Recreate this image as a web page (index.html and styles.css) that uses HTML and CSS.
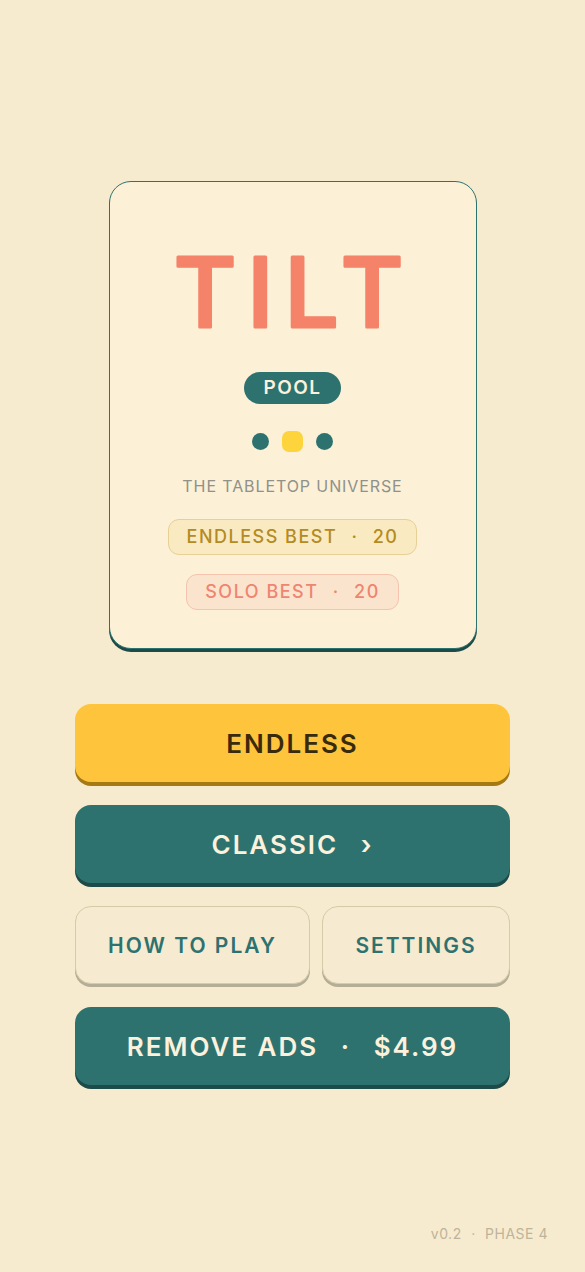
FILE: index.html
```html
<!DOCTYPE html>
<html lang="en">
<head>
  <meta charset="UTF-8" />
  <meta name="viewport" content="width=device-width, initial-scale=1.0"/>
  <title>Tilt Pool</title>
  <link rel="stylesheet" href="styles.css">
</head>
<body>
  <div class="screen">
    <div class="card">
      <svg class="title" width="320" height="126" viewBox="0 0 320 126">
        <text x="161" y="101" text-anchor="middle">TILT</text>
      </svg>
      <span class="mode-pill">POOL</span>
      <div class="dots">
        <span class="dot"></span>
        <span class="dot active"></span>
        <span class="dot"></span>
      </div>
      <p class="tagline">THE TABLETOP UNIVERSE</p>
      <div class="best endless-best">ENDLESS BEST <span class="sep">·</span> 20</div>
      <div class="best solo-best">SOLO BEST <span class="sep">·</span> 20</div>
    </div>

    <div class="menu">
      <button class="btn btn-yellow">ENDLESS</button>
      <button class="btn btn-teal">CLASSIC <span class="chev">›</span></button>
      <div class="row">
        <button class="btn btn-ghost how">HOW TO PLAY</button>
        <button class="btn btn-ghost settings">SETTINGS</button>
      </div>
      <button class="btn btn-teal">REMOVE ADS <span class="sep">·</span> $4.99</button>
    </div>

    <div class="footer">v0.2 <span class="sep">·</span> PHASE 4</div>
  </div>
</body>
</html>
```

FILE: styles.css
```css
* {
  box-sizing: border-box;
  margin: 0;
  padding: 0;
  font-family: 'Inter', 'Noto Sans', sans-serif;
}

:root {
  --bg-color: #f7ebcf;
  --card-color: #fcf0d7;
  --teal: #2e7270;
  --teal-dark: #1d4b49;
  --coral: #f4836a;
  --yellow: #fec53c;
  --yellow-dark: #a67a12;
}

body {
  background-color: var(--bg-color);
  min-height: 100vh;
}

.screen {
  height: 1272px;
  display: flex;
  flex-direction: column;
  align-items: center;
  padding-top: 181px;
}

.card {
  width: 368px;
  height: 468px;
  background-color: var(--card-color);
  border: 1.5px solid var(--teal);
  border-radius: 22px;
  box-shadow: 0 3px 0 var(--teal-dark);
  display: flex;
  flex-direction: column;
  align-items: center;
  padding-top: 44px;
}

.title {
  display: block;
}

.title text {
  font-family: 'Inter', sans-serif;
  font-size: 96px;
  font-weight: 500;
  letter-spacing: 11px;
  fill: var(--coral);
  stroke: var(--coral);
  stroke-width: 3px;
  stroke-linejoin: round;
}

.mode-pill {
  margin-top: 20px;
  height: 32px;
  padding: 0 19px;
  border-radius: 16px;
  background-color: var(--teal);
  color: #fbf1dc;
  font-size: 19px;
  font-weight: 600;
  letter-spacing: 1.5px;
  line-height: 32px;
}

.dots {
  margin-top: 26px;
  display: flex;
  align-items: center;
  gap: 13px;
  height: 22px;
}

.dot {
  width: 17px;
  height: 17px;
  border-radius: 50%;
  background-color: var(--teal);
}

.dot.active {
  width: 21px;
  height: 21px;
  border-radius: 7px;
  background-color: #fdd43b;
}

.tagline {
  margin-top: 24px;
  font-size: 16px;
  letter-spacing: 0.9px;
  color: #8f918a;
}

.best {
  height: 36px;
  line-height: 34px;
  padding: 0 18px;
  border-radius: 11px;
  border: 1px solid;
  font-size: 18px;
  font-weight: 500;
  letter-spacing: 1.5px;
}

.best .sep {
  margin: 0 8px;
}

.endless-best {
  margin-top: 23px;
  background-color: #faeac2;
  border-color: #e7d095;
  color: #b38b22;
}

.solo-best {
  margin-top: 19px;
  background-color: #fbe4ce;
  border-color: #f5c3ad;
  color: #ee8571;
}

.menu {
  margin-top: 55px;
  width: 435px;
  display: flex;
  flex-direction: column;
  gap: 23px;
}

.btn {
  height: 78px;
  border: none;
  border-radius: 16px;
  font-size: 26px;
  font-weight: 600;
  letter-spacing: 2px;
  cursor: pointer;
}

.btn .sep {
  margin: 0 14px;
}

.btn .chev {
  margin-left: 14px;
}

.btn-yellow {
  background-color: var(--yellow);
  color: #3a2a0c;
  box-shadow: 0 4px 0 var(--yellow-dark);
}

.btn-teal {
  background-color: var(--teal);
  color: #fbf1dc;
  box-shadow: 0 4px 0 var(--teal-dark);
}

.row {
  display: flex;
  gap: 12px;
}

.btn-ghost {
  background-color: #f6ead0;
  border: 1.5px solid #d7caa7;
  color: var(--teal);
  font-size: 21px;
  box-shadow: 0 3px 0 #b4ad97;
}

.how {
  flex: 0 0 235px;
}

.settings {
  flex: 1;
}

.footer {
  margin-top: auto;
  align-self: flex-end;
  margin-right: 37px;
  margin-bottom: 30px;
  font-size: 14px;
  letter-spacing: 0.5px;
  color: #bdb49a;
}

.footer .sep {
  margin: 0 5px;
}
```
